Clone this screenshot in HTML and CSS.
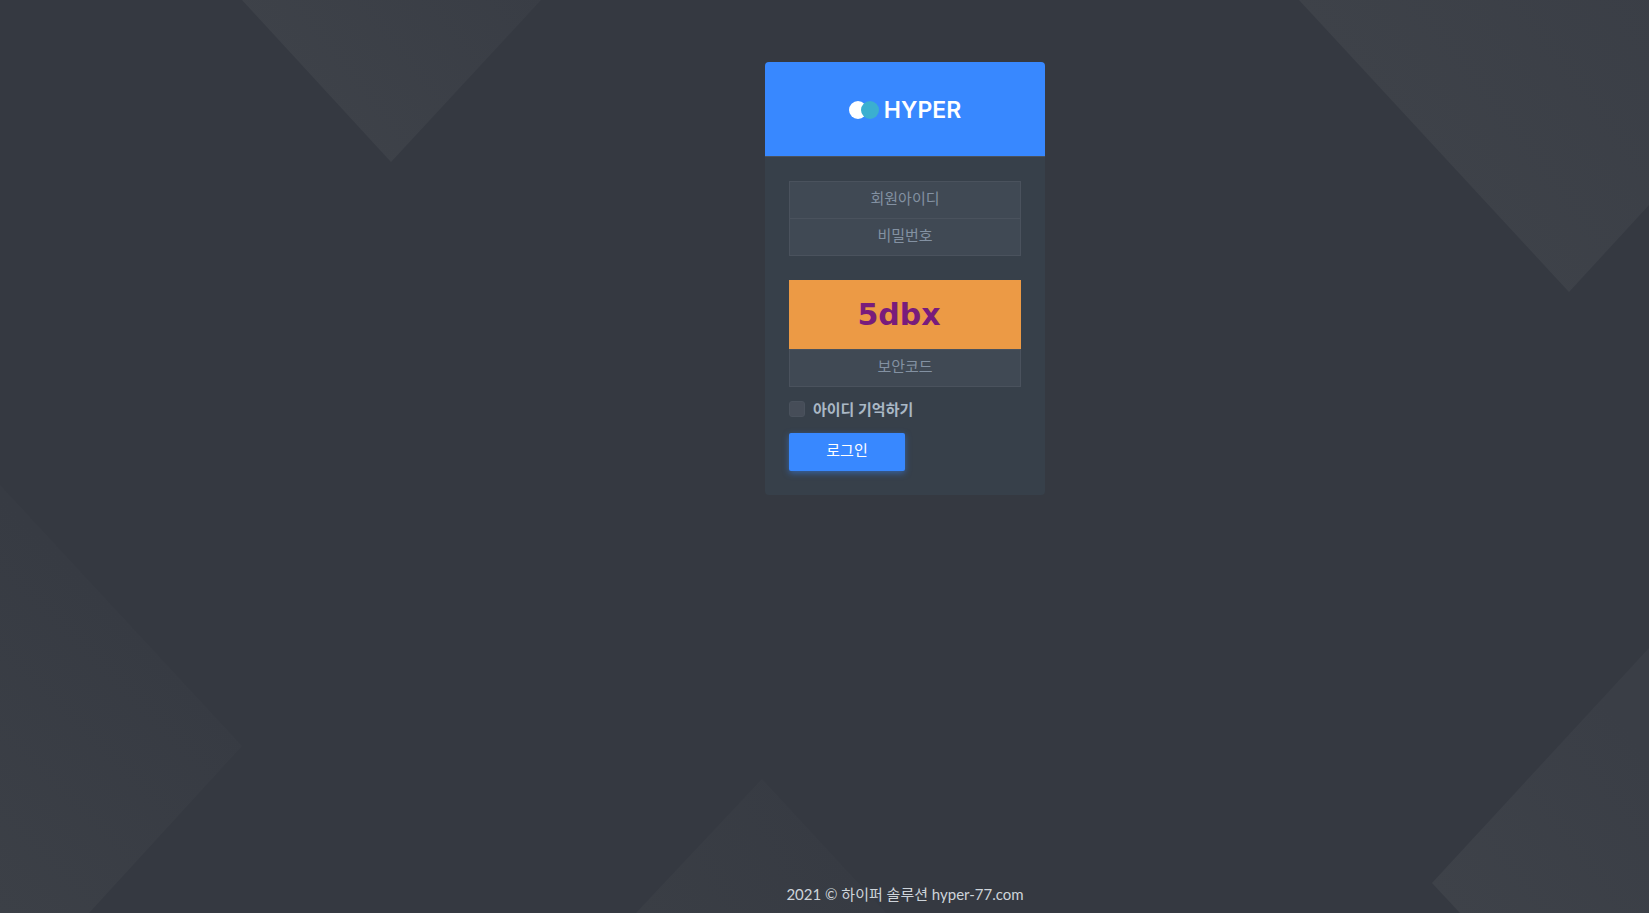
FILE: index.html
```html
<!DOCTYPE html>
<html lang="ko">
<head>
    <meta charset="UTF-8">
    <meta name="viewport" content="width=device-width, initial-scale=1.0">
    <title>HYPER</title>
    <link rel="stylesheet" href="styles.css">
</head>
<body>
    <svg class="bg-pattern" viewBox="0 0 1649 913" preserveAspectRatio="none" aria-hidden="true">
        <defs>
            <linearGradient id="g1" gradientUnits="userSpaceOnUse" x1="290" y1="100" x2="500" y2="-65">
                <stop offset="0" stop-color="#3e4249"/>
                <stop offset="1" stop-color="#393d45"/>
            </linearGradient>
            <linearGradient id="g2" gradientUnits="userSpaceOnUse" x1="1400" y1="140" x2="1650" y2="-56">
                <stop offset="0" stop-color="#3e4249"/>
                <stop offset="1" stop-color="#3a3e46"/>
            </linearGradient>
            <linearGradient id="g3" gradientUnits="userSpaceOnUse" x1="0" y1="913" x2="210" y2="700">
                <stop offset="0" stop-color="#3c4047"/>
                <stop offset="1" stop-color="#373b43"/>
            </linearGradient>
            <linearGradient id="g4" gradientUnits="userSpaceOnUse" x1="640" y1="913" x2="820" y2="810">
                <stop offset="0" stop-color="#3a3e45"/>
                <stop offset="1" stop-color="#373b43"/>
            </linearGradient>
            <linearGradient id="g5" gradientUnits="userSpaceOnUse" x1="1450" y1="913" x2="1649" y2="757">
                <stop offset="0" stop-color="#3e4249"/>
                <stop offset="1" stop-color="#3a3e46"/>
            </linearGradient>
        </defs>
        <path fill="url(#g1)" d="M242 0H541L391 162Z"/>
        <path fill="url(#g2)" d="M1299 0H1649V205L1569 292Z"/>
        <path fill="url(#g3)" d="M0 485L242 746L89 913H0Z"/>
        <path fill="url(#g4)" d="M636 913L762 779L886 913Z"/>
        <path fill="url(#g5)" d="M1649 648L1432 883L1460 913H1649Z"/>
    </svg>

    <main class="account-page">
        <div class="card">
            <div class="card-header">
                <a href="#" class="logo">
                    <svg class="logo-icon" width="30" height="18" viewBox="0 0 30 18" aria-hidden="true">
                        <circle cx="9" cy="9" r="9" fill="#fff"/>
                        <circle cx="21" cy="9" r="9" fill="#3bafd0"/>
                    </svg>
                    <span>HYPER</span>
                </a>
            </div>

            <form class="card-body">
                <div class="input-stack">
                    <input type="text" class="form-control" id="userid" name="userid" placeholder="회원아이디" aria-label="회원아이디">
                    <input type="password" class="form-control" id="password" name="password" placeholder="비밀번호" aria-label="비밀번호">
                </div>

                <div class="captcha">5dbx</div>
                <input type="text" class="form-control" id="captcha" name="captcha" placeholder="보안코드" aria-label="보안코드">

                <div class="form-check">
                    <input type="checkbox" class="check-input" id="remember" name="remember">
                    <label for="remember">아이디 기억하기</label>
                </div>

                <button type="submit" class="btn-login">로그인</button>
            </form>
        </div>
    </main>

    <footer class="footer">2021 © 하이퍼 솔루션 hyper-77.com</footer>
</body>
</html>
```

FILE: styles.css
```css
* {
    box-sizing: border-box;
}

body {
    display: flex;
    flex-direction: column;
    min-height: 100vh;
    margin: 0;
    padding-left: 161px;
    background-color: #353941;
    color: #aab8c5;
    font-family: Lato, "Noto Sans CJK KR", sans-serif;
    font-size: 15px;
    line-height: 24px;
}

.bg-pattern {
    position: absolute;
    top: 0;
    left: 0;
    width: 100%;
    height: 100%;
    z-index: -1;
}

.account-page {
    flex: 1;
    padding-top: 62px;
}

.card {
    width: 280px;
    margin: 0 auto;
    background-color: #37404a;
    border-radius: 4px;
}

.card-header {
    padding: 36px 24px 34px;
    background-color: #3888ff;
    border-bottom: 1px solid #4a525d;
    border-radius: 4px 4px 0 0;
}

.logo {
    display: flex;
    align-items: center;
    justify-content: center;
    gap: 5px;
    color: #fff;
    font-family: Inter, "Liberation Sans", sans-serif;
    font-size: 23px;
    font-weight: 600;
    text-decoration: none;
}

.card-body {
    padding: 24px;
}

.input-stack {
    margin-bottom: 24px;
}

.form-control {
    display: block;
    width: 100%;
    height: 38px;
    padding: 4px 14px 8px;
    background-color: #404954;
    border: 1px solid #4a525d;
    border-radius: 0;
    color: #e3eaef;
    font-family: inherit;
    font-size: 15px;
    text-align: center;
    outline: none;
}

.form-control + .form-control {
    margin-top: -1px;
}

.form-control::placeholder {
    color: #8391a2;
    opacity: 1;
}

.form-control:focus {
    border-color: #5a6371;
}

.captcha {
    height: 69px;
    padding-right: 12px;
    background-color: #ec9a45;
    color: #781c7c;
    font-family: "DejaVu Sans", sans-serif;
    font-size: 30px;
    font-weight: bold;
    line-height: 69px;
    text-align: center;
}

.form-check {
    display: flex;
    align-items: center;
    gap: 8px;
    margin: 10px 0 12px;
    font-weight: bold;
}

.check-input {
    appearance: none;
    width: 16px;
    height: 16px;
    margin: 0;
    background-color: #464d58;
    border: 1px solid #4a525d;
    border-radius: 3px;
}

.check-input:checked {
    background-color: #3888ff;
}

.btn-login {
    display: block;
    width: 50%;
    height: 38px;
    padding: 0 14px 5px;
    background-color: #3888ff;
    border: none;
    border-radius: 2px;
    box-shadow: 0 2px 6px 0 rgba(56, 136, 255, 0.5);
    color: #fff;
    font-family: inherit;
    font-size: 15px;
    cursor: pointer;
}

.footer {
    padding: 0 24px 7px;
    color: #ced4da;
    text-align: center;
}
```
